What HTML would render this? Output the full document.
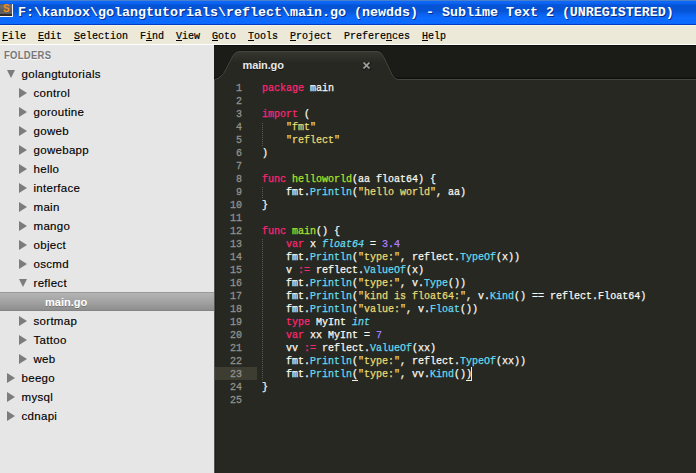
<!DOCTYPE html>
<html><head><meta charset="utf-8">
<style>
*{margin:0;padding:0;box-sizing:border-box}
html,body{width:696px;height:473px;overflow:hidden;background:#272822}
body{position:relative;font-family:"Liberation Sans",sans-serif}
#title{position:absolute;left:0;top:0;width:696px;height:25px;background:linear-gradient(#4a7fcc 0px,#4a7fcc 1px,#0c66f6 1px,#0c66f6 3px,#0654d6 5px,#0654d6 11px,#0a60ec 14px,#0c6bfe 18px,#0c6bfe 24px,#003cc2 24px,#003cc2 25px)}
#title .t{position:absolute;left:18px;top:5px;font-family:"Liberation Mono",monospace;font-weight:bold;font-size:13.33px;line-height:16px;color:#fff;white-space:pre;text-shadow:1px 1px 0 #0a2a8a}
#icon{position:absolute;left:0;top:4px;width:13px;height:13px;background:linear-gradient(90deg,transparent 12px,#f4f4f4 12px)}
#icon span{position:absolute;left:3px;top:-1px;font:bold 10px/12px "Liberation Sans",sans-serif;color:#f28c1e}
#icon i{position:absolute;left:0;top:0;width:12px;height:12px;background:linear-gradient(#5a5a5a 0px,#6e6e6e 2px,#555 8px,#777 9px,#3a3a3a 10px,#222 11px,#333 12px)}
#icon b{position:absolute;left:0;top:12px;width:13px;height:1px;background:#f8f8f8}
#menu{position:absolute;left:0;top:25px;width:696px;height:19px;background:linear-gradient(#f8f4e4 0px,#f8f4e4 1px,#ece9d8 1px)}
#menu span{position:absolute;top:6px;font-family:"Liberation Mono",monospace;font-size:10px;line-height:12px;color:#000;white-space:pre;-webkit-text-stroke:0.2px #000}
#menu u{text-decoration:underline;text-underline-offset:1px}
#wline{position:absolute;left:0;top:44px;width:696px;height:1px;background:#fff}
#side{position:absolute;left:0;top:45px;width:214px;height:428px;background:#e6e6e6}
#side .hdr{position:absolute;left:4px;top:3px;font-weight:bold;font-size:11.5px;letter-spacing:0.4px;line-height:14px;color:#777;text-shadow:0 1px 0 #fafafa;transform:scaleX(0.82);transform-origin:0 0}
#side .row{position:absolute;left:0;width:214px;height:19px;font-size:11.5px;letter-spacing:0.3px;line-height:19px;color:#000;white-space:pre}
#side .row b{position:absolute;top:1px;font-weight:normal;-webkit-text-stroke:0.15px #000}
#side .sel{background:linear-gradient(#9a9a9a 0px,#9a9a9a 1px,#b4b4b4 1px,#a4a4a4 9px,#8e8e8e 18px,#848484 18px,#848484 19px);color:#fff}
#side .sel b{font-weight:bold;font-size:11px;letter-spacing:0;-webkit-text-stroke:0;color:#fff;text-shadow:0 1px 0 rgba(0,0,0,0.25)}
.tri{position:absolute;width:0;height:0}
.tr{top:5px;border-top:5px solid transparent;border-bottom:5px solid transparent;border-left:8.5px solid #7c7c7c}
.td{top:6px;border-left:4.7px solid transparent;border-right:4.7px solid transparent;border-top:8.3px solid #7c7c7c}
#editor{position:absolute;left:214px;top:45px;width:482px;height:428px;background:#272822}
#tabbar{position:absolute;left:0;top:0;width:482px;height:34px;background:#1b1c17}
.tabt{position:absolute;left:28.6px;top:13px;font-weight:bold;font-size:11px;letter-spacing:-0.15px;line-height:14px;color:#e8e8e8;text-shadow:0 1px 0 #111}
.tabx{position:absolute;left:148px;top:13px;font-weight:bold;font-size:12px;line-height:14px;color:#999}
#gutterhl{position:absolute;left:1px;top:322px;width:42px;height:13px;background:#3e3d32}
#code{position:absolute;left:0;top:37px;width:482px}
.ln{position:absolute;left:0;width:28px;text-align:right;font-family:"Liberation Mono",monospace;font-size:10px;line-height:13px;color:#8f908a;white-space:pre;-webkit-text-stroke:0.3px #8f908a}
.cl{position:absolute;left:48px;font-family:"Liberation Mono",monospace;font-size:10px;line-height:13px;color:#f8f8f2;white-space:pre;-webkit-text-stroke:0.25px}
.k{color:#f92672}.s{color:#e6db74}.f{color:#a6e22e}.c{color:#66d9ef}.i{color:#66d9ef;font-style:italic}.n{color:#ae81ff}
.mark{position:absolute;background:#f0f0ea}

.guide{position:absolute;left:48px;width:1px;background:repeating-linear-gradient(#5a5a54 0px,#5a5a54 1px,transparent 1px,transparent 2px)}

</style></head><body>
<div id="title"><div id="icon"><i></i><b></b><span>S</span></div><div class="t">F:\kanbox\golangtutorials\reflect\main.go (newdds) - Sublime Text 2 (UNREGISTERED)</div></div>
<div id="menu"><span style="left:2px"><u>F</u>ile</span><span style="left:38px"><u>E</u>dit</span><span style="left:74px"><u>S</u>election</span><span style="left:140px">F<u>i</u>nd</span><span style="left:176px"><u>V</u>iew</span><span style="left:212px"><u>G</u>oto</span><span style="left:248px"><u>T</u>ools</span><span style="left:290px"><u>P</u>roject</span><span style="left:344px">Prefere<u>n</u>ces</span><span style="left:422px"><u>H</u>elp</span></div>
<div id="wline"></div>
<div id="side"><div class="hdr">FOLDERS</div>
<div class="row" style="top:19px"><i class="tri td" style="left:7px"></i><b style="left:21.5px">golangtutorials</b></div>
<div class="row" style="top:38px"><i class="tri tr" style="left:19px"></i><b style="left:33.5px">control</b></div>
<div class="row" style="top:57px"><i class="tri tr" style="left:19px"></i><b style="left:33.5px">goroutine</b></div>
<div class="row" style="top:76px"><i class="tri tr" style="left:19px"></i><b style="left:33.5px">goweb</b></div>
<div class="row" style="top:95px"><i class="tri tr" style="left:19px"></i><b style="left:33.5px">gowebapp</b></div>
<div class="row" style="top:114px"><i class="tri tr" style="left:19px"></i><b style="left:33.5px">hello</b></div>
<div class="row" style="top:133px"><i class="tri tr" style="left:19px"></i><b style="left:33.5px">interface</b></div>
<div class="row" style="top:152px"><i class="tri tr" style="left:19px"></i><b style="left:33.5px">main</b></div>
<div class="row" style="top:171px"><i class="tri tr" style="left:19px"></i><b style="left:33.5px">mango</b></div>
<div class="row" style="top:190px"><i class="tri tr" style="left:19px"></i><b style="left:33.5px">object</b></div>
<div class="row" style="top:209px"><i class="tri tr" style="left:19px"></i><b style="left:33.5px">oscmd</b></div>
<div class="row" style="top:228px"><i class="tri td" style="left:19px"></i><b style="left:33.5px">reflect</b></div>
<div class="row sel" style="top:247px"><b style="left:45.0px">main.go</b></div>
<div class="row" style="top:266px"><i class="tri tr" style="left:19px"></i><b style="left:33.5px">sortmap</b></div>
<div class="row" style="top:285px"><i class="tri tr" style="left:19px"></i><b style="left:33.5px">Tattoo</b></div>
<div class="row" style="top:304px"><i class="tri tr" style="left:19px"></i><b style="left:33.5px">web</b></div>
<div class="row" style="top:323px"><i class="tri tr" style="left:7px"></i><b style="left:21.5px">beego</b></div>
<div class="row" style="top:342px"><i class="tri tr" style="left:7px"></i><b style="left:21.5px">mysql</b></div>
<div class="row" style="top:361px"><i class="tri tr" style="left:7px"></i><b style="left:21.5px">cdnapi</b></div>
</div>
<div id="editor"><div id="tabbar"><svg width="482" height="40" style="position:absolute;left:0;top:0"><defs><linearGradient id="tg" gradientUnits="userSpaceOnUse" x1="0" y1="6" x2="0" y2="18"><stop offset="0" stop-color="#36372f"/><stop offset="1" stop-color="#272822"/></linearGradient><linearGradient id="sh" gradientUnits="userSpaceOnUse" x1="0" y1="0" x2="0" y2="1"><stop offset="0" stop-color="#000" stop-opacity="0.5"/><stop offset="1" stop-color="#000" stop-opacity="0"/></linearGradient></defs><rect x="0" y="0" width="482" height="1" fill="#0e0f0c"/><rect x="0" y="32" width="482" height="1" fill="#161713"/><rect x="0" y="33" width="482" height="1" fill="#10110d"/><path d="M0,34.5 C4,34 8,31 10.5,27 L16.5,15.5 C18.5,11 20.5,6.5 26,6.5 L162,6.5 C166.5,6.5 168,8.5 169.5,11.5 L175,23 C177.5,28.5 179.5,34.5 184.5,34.5 L482,34.5 L482,40 L0,40 Z" fill="url(#tg)"/><path d="M0,34.5 C4,34 8,31 10.5,27 L16.5,15.5 C18.5,11 20.5,6.5 26,6.5 L162,6.5 C166.5,6.5 168,8.5 169.5,11.5 L175,23 C177.5,28.5 179.5,34.5 184.5,34.5 L482,34.5" fill="none" stroke="#0f100d" stroke-width="1" transform="translate(0,-1)" opacity="0.6"/><path d="M0,34.5 C4,34 8,31 10.5,27 L16.5,15.5 C18.5,11 20.5,6.5 26,6.5 L162,6.5 C166.5,6.5 168,8.5 169.5,11.5 L175,23 C177.5,28.5 179.5,34.5 184.5,34.5 L482,34.5" fill="none" stroke="#45463f" stroke-width="1"/><g stroke="#1a1a18" stroke-width="2.2" stroke-linecap="square" transform="translate(0.5,0.8)"><line x1="149.5" y1="17.5" x2="155.5" y2="23.5"/><line x1="155.5" y1="17.5" x2="149.5" y2="23.5"/></g><g stroke="#a3a3a3" stroke-width="1.7" stroke-linecap="butt"><line x1="149.5" y1="17.5" x2="155.5" y2="23.5"/><line x1="155.5" y1="17.5" x2="149.5" y2="23.5"/></g></svg><div class="tabt">main.go</div></div>
<div style="position:absolute;left:0;top:35px;width:1px;height:400px;background:#575853"></div><div style="position:absolute;left:1px;top:35px;width:1px;height:400px;background:#20211c"></div><div id="gutterhl"></div><div class="guide" style="top:78px;height:23px"></div><div class="guide" style="top:142px;height:11px"></div><div class="guide" style="top:194px;height:141px"></div><div class="mark" style="left:138px;top:335px;width:6px;height:1px"></div><div class="mark" style="left:252px;top:335px;width:6px;height:1px"></div><div class="mark" style="left:257px;top:322px;width:1px;height:14px"></div><div id="code">
<div class="ln" style="top:0px">1</div><div class="cl" style="top:0px"><span class="k">package</span> main</div>
<div class="ln" style="top:13px">2</div><div class="cl" style="top:13px"></div>
<div class="ln" style="top:26px">3</div><div class="cl" style="top:26px"><span class="k">import</span> (</div>
<div class="ln" style="top:39px">4</div><div class="cl" style="top:39px">    <span class="s">"fmt"</span></div>
<div class="ln" style="top:52px">5</div><div class="cl" style="top:52px">    <span class="s">"reflect"</span></div>
<div class="ln" style="top:65px">6</div><div class="cl" style="top:65px">)</div>
<div class="ln" style="top:78px">7</div><div class="cl" style="top:78px"></div>
<div class="ln" style="top:91px">8</div><div class="cl" style="top:91px"><span class="k">func</span> <span class="f">helloworld</span>(aa float64) {</div>
<div class="ln" style="top:104px">9</div><div class="cl" style="top:104px">    fmt.<span class="c">Println</span>(<span class="s">"hello world"</span>, aa)</div>
<div class="ln" style="top:117px">10</div><div class="cl" style="top:117px">}</div>
<div class="ln" style="top:130px">11</div><div class="cl" style="top:130px"></div>
<div class="ln" style="top:143px">12</div><div class="cl" style="top:143px"><span class="k">func</span> <span class="f">main</span>() {</div>
<div class="ln" style="top:156px">13</div><div class="cl" style="top:156px">    <span class="k">var</span> x <span class="i">float64</span> = <span class="n">3.4</span></div>
<div class="ln" style="top:169px">14</div><div class="cl" style="top:169px">    fmt.<span class="c">Println</span>(<span class="s">"type:"</span>, reflect.<span class="c">TypeOf</span>(x))</div>
<div class="ln" style="top:182px">15</div><div class="cl" style="top:182px">    v <span class="k">:=</span> reflect.<span class="c">ValueOf</span>(x)</div>
<div class="ln" style="top:195px">16</div><div class="cl" style="top:195px">    fmt.<span class="c">Println</span>(<span class="s">"type:"</span>, v.<span class="c">Type</span>())</div>
<div class="ln" style="top:208px">17</div><div class="cl" style="top:208px">    fmt.<span class="c">Println</span>(<span class="s">"kind is float64:"</span>, v.<span class="c">Kind</span>() == reflect.Float64)</div>
<div class="ln" style="top:221px">18</div><div class="cl" style="top:221px">    fmt.<span class="c">Println</span>(<span class="s">"value:"</span>, v.<span class="c">Float</span>())</div>
<div class="ln" style="top:234px">19</div><div class="cl" style="top:234px">    <span class="k">type</span> MyInt <span class="i">int</span></div>
<div class="ln" style="top:247px">20</div><div class="cl" style="top:247px">    <span class="k">var</span> xx MyInt = <span class="n">7</span></div>
<div class="ln" style="top:260px">21</div><div class="cl" style="top:260px">    vv <span class="k">:=</span> reflect.<span class="c">ValueOf</span>(xx)</div>
<div class="ln" style="top:273px">22</div><div class="cl" style="top:273px">    fmt.<span class="c">Println</span>(<span class="s">"type:"</span>, reflect.<span class="c">TypeOf</span>(xx))</div>
<div class="ln" style="top:286px">23</div><div class="cl" style="top:286px">    fmt.<span class="c">Println</span><span class="u">(</span><span class="s">"type:"</span>, vv.<span class="c">Kind</span>()<span class="u">)</span></div>
<div class="ln" style="top:299px">24</div><div class="cl" style="top:299px">}</div>
<div class="ln" style="top:312px">25</div><div class="cl" style="top:312px"></div>
</div></div>
</body></html>
